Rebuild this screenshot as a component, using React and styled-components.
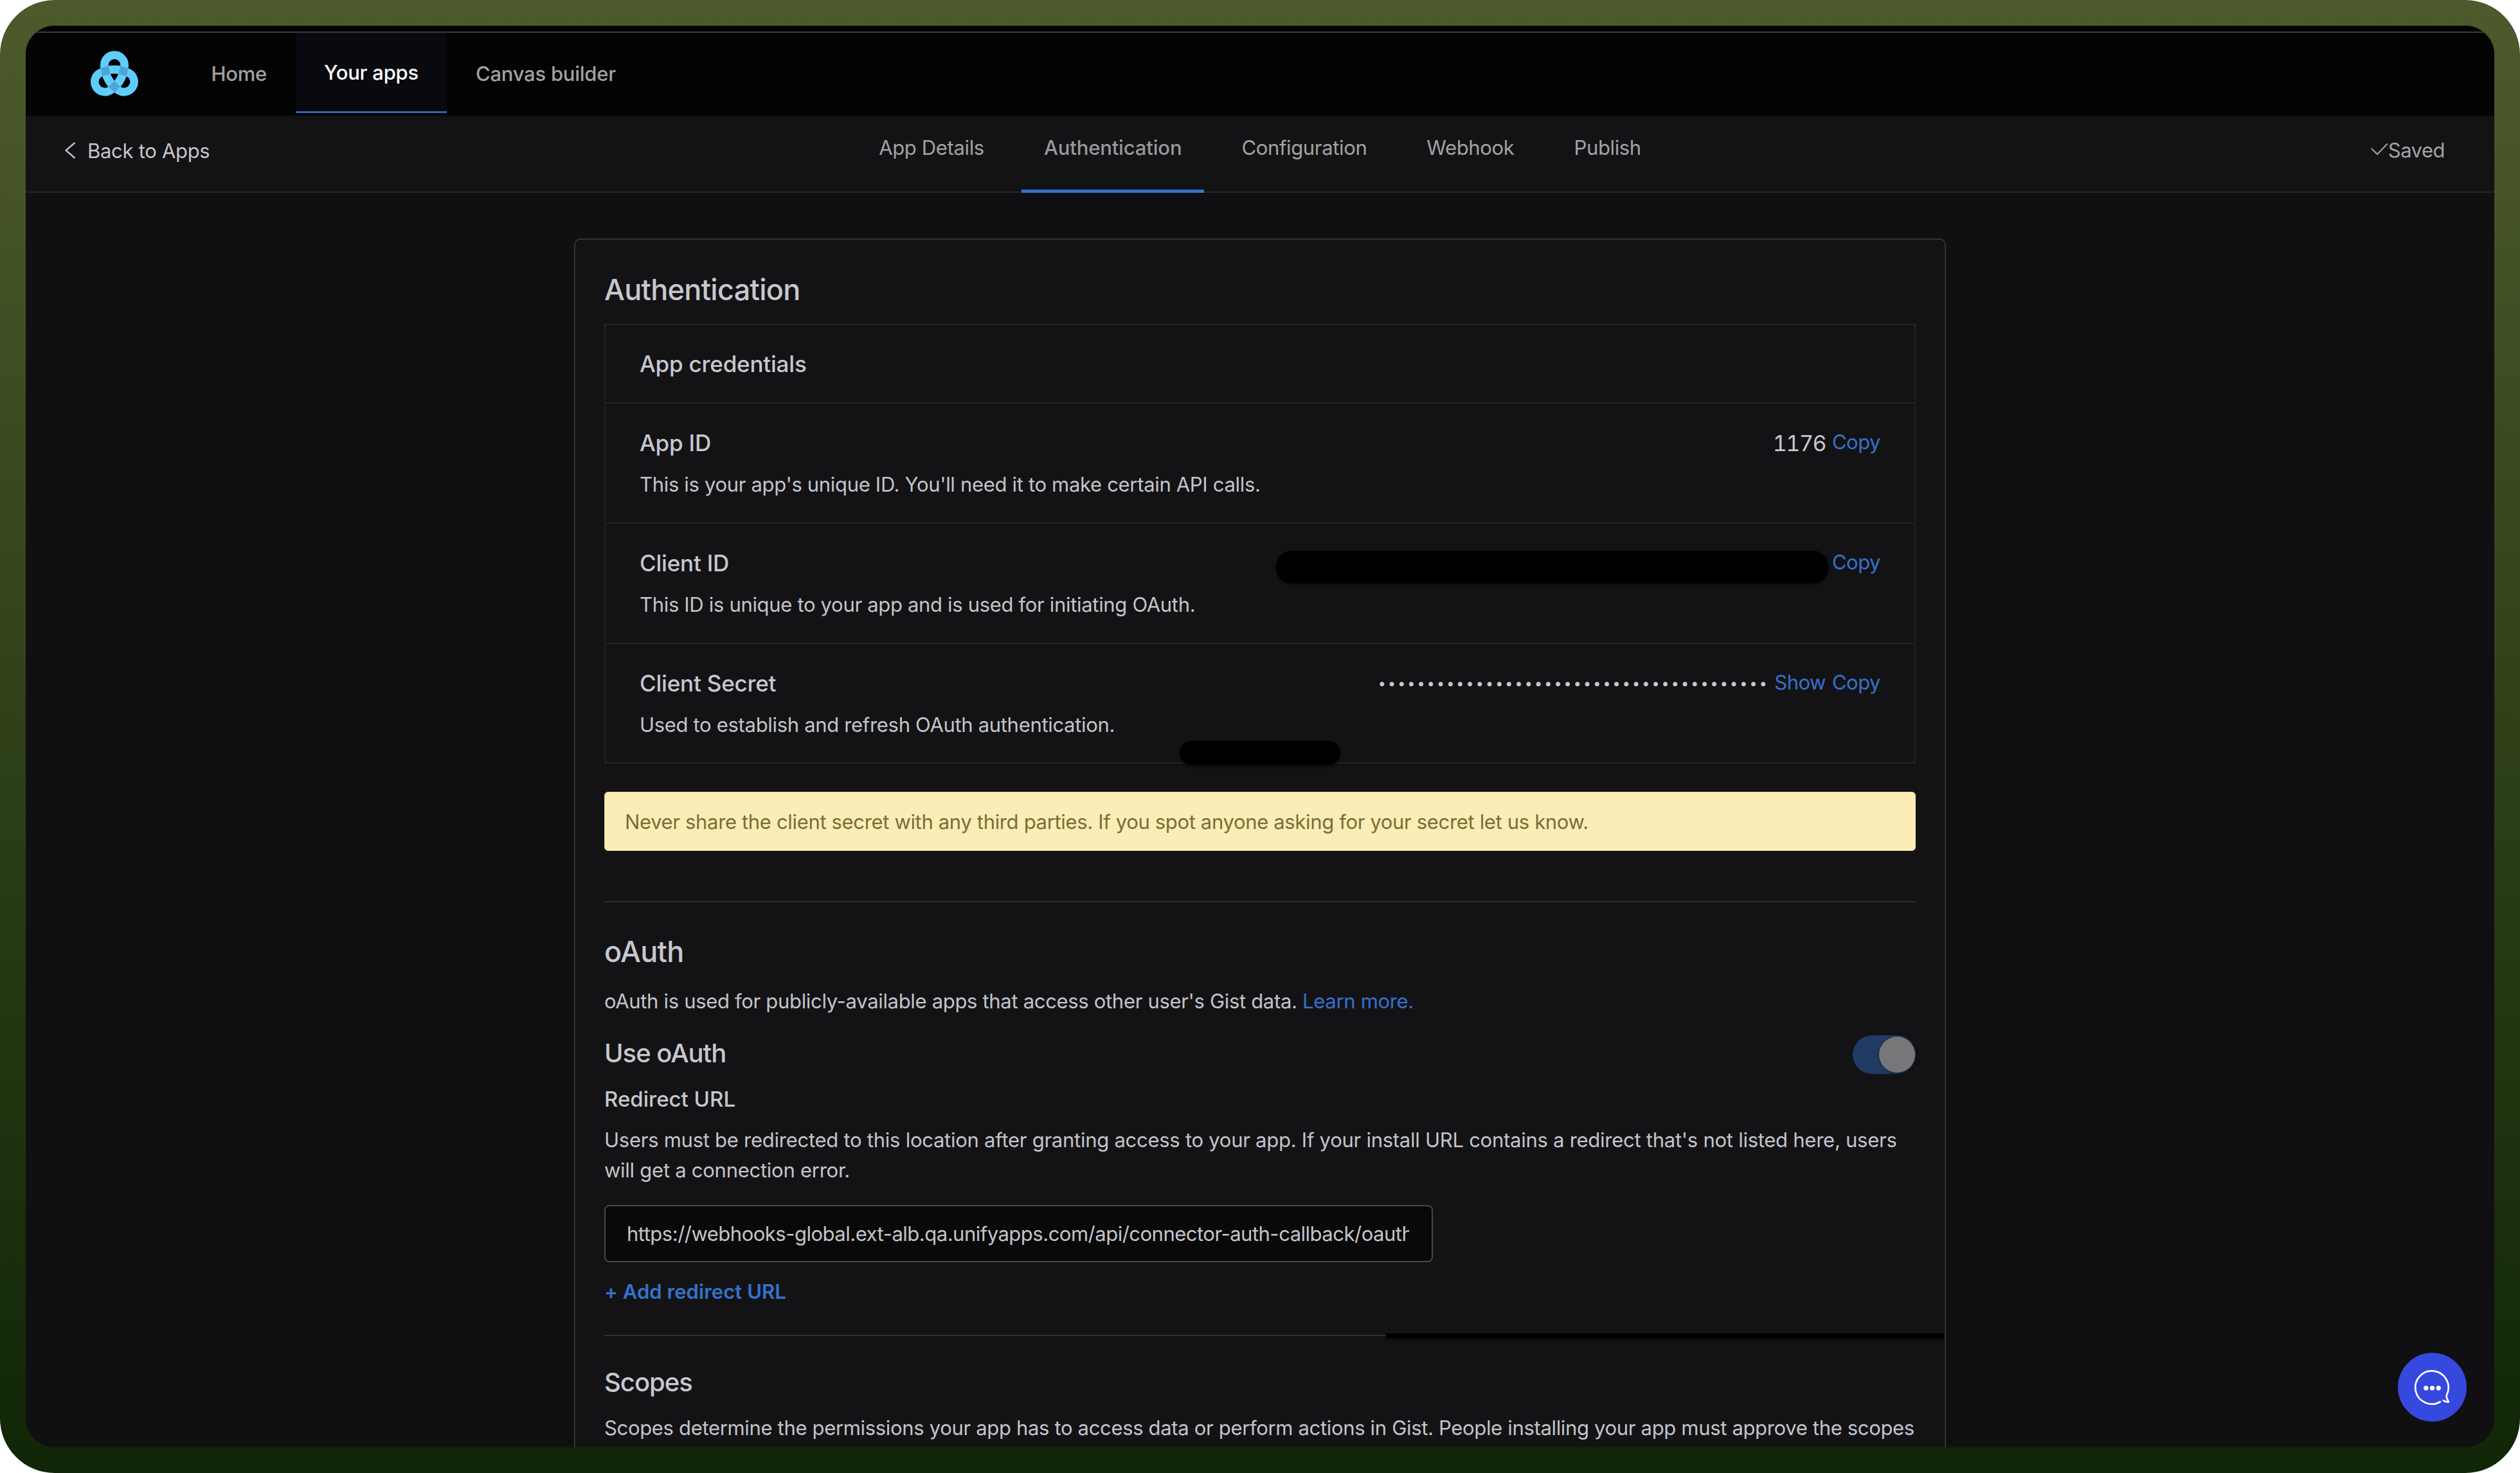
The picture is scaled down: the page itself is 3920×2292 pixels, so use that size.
import React from "react";
import styled, { createGlobalStyle } from "styled-components";

const navItems = [
  { label: "Home" },
  { label: "Your apps", active: true },
  { label: "Canvas builder" },
];

const tabs = [
  { label: "App Details" },
  { label: "Authentication", active: true },
  { label: "Configuration" },
  { label: "Webhook" },
  { label: "Publish" },
];

const LOBE =
  "M264 224 C238 200 217 165 217 123 A47 47 0 0 1 311 123 C311 165 290 200 264 224 Z";

function Logo() {
  return (
    <LogoSvg viewBox="150 50 228 222">
      {[0, 120, 240].map((angle) => (
        <path
          key={angle}
          d={LOBE}
          transform={`rotate(${angle} 264 175)`}
          fill="none"
          stroke="#5fcdfa"
          strokeWidth="38"
        />
      ))}
      {[0, 120, 240].map((angle) => (
        <path
          key={angle}
          d="M264 197 L291 224 L264 250 L237 224 Z"
          transform={`rotate(${angle} 264 175)`}
          fill="#4fa3d6"
        />
      ))}
    </LogoSvg>
  );
}

export default function App() {
  return (
    <>
      <GlobalStyle />
      <Backdrop>
        <Screen>
          <TopStrip />
          <Navbar>
            <Logo />
            {navItems.map((item) => (
              <NavItem key={item.label} $active={item.active}>
                {item.label}
              </NavItem>
            ))}
          </Navbar>

          <SubHeader>
            <BackLink>
              <BackIcon viewBox="0 0 17 26">
                <path d="M15.5 1 L1.5 13 L15.5 25" fill="none" stroke="currentColor" strokeWidth="2.4" />
              </BackIcon>
              Back to Apps
            </BackLink>
            <Tabs>
              {tabs.map((tab) => (
                <Tab key={tab.label} $active={tab.active}>
                  {tab.label}
                </Tab>
              ))}
            </Tabs>
            <Saved>
              <CheckIcon viewBox="0 0 27 20">
                <path d="M0.8 9 L10 18 L26 1.5" fill="none" stroke="currentColor" strokeWidth="2" />
              </CheckIcon>
              Saved
            </Saved>
          </SubHeader>

          <Body>
            <Card>
              <SectionTitle $top={46}>Authentication</SectionTitle>
              <Credentials>
                <CredentialsHeader>
                  <Label>App credentials</Label>
                </CredentialsHeader>
                <CredentialRow>
                  <div>
                    <Label>App ID</Label>
                    <Hint>This is your app's unique ID. You'll need it to make certain API calls.</Hint>
                  </div>
                  <Value>
                    <AppId>1176</AppId>
                    <Action>Copy</Action>
                  </Value>
                </CredentialRow>
                <CredentialRow>
                  <div>
                    <Label>Client ID</Label>
                    <Hint>This ID is unique to your app and is used for initiating OAuth.</Hint>
                  </div>
                  <Value>
                    <HiddenId />
                    <Action>Copy</Action>
                  </Value>
                </CredentialRow>
                <CredentialRow $last>
                  <div>
                    <Label>Client Secret</Label>
                    <Hint>Used to establish and refresh OAuth authentication.</Hint>
                  </div>
                  <Value>
                    <Dots>{"•".repeat(40)}</Dots>
                    <Action>Show</Action>
                    <Action>Copy</Action>
                  </Value>
                </CredentialRow>
                <HiddenPatch />
              </Credentials>

              <Alert>
                Never share the client secret with any third parties. If you spot anyone asking for your secret let us
                know.
              </Alert>

              <Divider $top={78} />

              <SectionTitle $top={45}>oAuth</SectionTitle>
              <Text $top={21}>
                oAuth is used for publicly-available apps that access other user's Gist data.{" "}
                <TextLink>Learn more.</TextLink>
              </Text>

              <ToggleRow>
                <SubTitle>Use oAuth</SubTitle>
                <Toggle>
                  <Knob />
                </Toggle>
              </ToggleRow>

              <FieldTitle>Redirect URL</FieldTitle>
              <Text $top={15} $spacing={-0.26}>
                Users must be redirected to this location after granting access to your app. If your install URL
                contains a redirect that's not listed here, users
                <br />
                will get a connection error.
              </Text>
              <UrlInput
                readOnly
                value="https://webhooks-global.ext-alb.qa.unifyapps.com/api/connector-auth-callback/oauth"
              />
              <AddButton>+ Add redirect URL</AddButton>

              <Divider $top={44}>
                <DividerCover />
              </Divider>

              <ScopesTitle>Scopes</ScopesTitle>
              <Text $top={17} $spacing={-0.33}>
                Scopes determine the permissions your app has to access data or perform actions in Gist. People
                installing your app must approve the scopes
              </Text>
            </Card>
          </Body>

          <ChatButton>
            <ChatIcon viewBox="0 0 320 320">
              <path
                d="M197 228 A77 77 0 1 1 229 192 Q224 200 228 211 L236 229 Q225 229 212 222"
                fill="none"
                stroke="#fff"
                strokeWidth="8"
                strokeLinecap="round"
                strokeLinejoin="round"
              />
              <circle cx="131" cy="164" r="11" fill="#fff" />
              <circle cx="160" cy="164" r="11" fill="#fff" />
              <circle cx="189" cy="164" r="11" fill="#fff" />
            </ChatIcon>
          </ChatButton>
        </Screen>
      </Backdrop>
    </>
  );
}

const GlobalStyle = createGlobalStyle`
  * {
    box-sizing: border-box;
  }

  body {
    margin: 0;
    background: #fff;
    font-family: Inter, "Liberation Sans", sans-serif;
  }
`;

const Backdrop = styled.div`
  height: 2292px;
  padding: 40px;
  border-radius: 85px;
  background: linear-gradient(180deg, #4d5a2b 0%, #102606 100%);
`;

const Screen = styled.div`
  position: relative;
  height: 2212px;
  overflow: hidden;
  border-radius: 45px;
  background: #101012;
  display: flex;
  flex-direction: column;
`;

const TopStrip = styled.div`
  flex: none;
  height: 11px;
  background: #000;
  border-bottom: 2px solid #3c3c3c;
`;

const Navbar = styled.nav`
  flex: none;
  display: flex;
  height: 129px;
  padding-left: 100px;
  background: #030303;
`;

const LogoSvg = styled.svg`
  width: 76px;
  height: 74px;
  margin: 26px 68px 0 0;
`;

const NavItem = styled.a`
  display: flex;
  align-items: center;
  height: ${(p) => (p.$active ? "125px" : "127px")};
  padding: 0 44.5px;
  border-bottom: ${(p) => (p.$active ? "3px solid #2f66b8" : "none")};
  background: ${(p) => (p.$active ? "#090a10" : "transparent")};
  color: ${(p) => (p.$active ? "#fff" : "#a2a2a2")};
  font-size: 31px;
  font-weight: 500;
  letter-spacing: -0.25px;
`;

const SubHeader = styled.div`
  flex: none;
  display: grid;
  grid-template-columns: 1fr auto 1fr;
  height: 120px;
  border-bottom: 2px solid #262628;
  background: #131315;
`;

const BackLink = styled.a`
  display: flex;
  align-items: center;
  height: 108px;
  padding-left: 61px;
  color: #c3c5cb;
  font-size: 31px;
  letter-spacing: -0.3px;
`;

const BackIcon = styled.svg`
  width: 17px;
  height: 26px;
  margin: -1px 18px 0 0;
`;

const Tabs = styled.div`
  display: flex;
  gap: 23px;
  height: 120px;
`;

const Tab = styled.a`
  display: flex;
  align-items: center;
  height: 120px;
  padding: 0 35px 16px;
  border-bottom: 5px solid ${(p) => (p.$active ? "#3873cf" : "transparent")};
  color: ${(p) => (p.$active ? "#98989a" : "#a3a3a3")};
  font-size: 31px;
  font-weight: ${(p) => (p.$active ? 500 : 400)};
  letter-spacing: ${(p) => (p.$active ? "-0.15px" : "-0.35px")};
`;

const Saved = styled.div`
  display: flex;
  align-items: center;
  justify-content: flex-end;
  height: 106px;
  padding-right: 77px;
  color: #a3a3a4;
  font-size: 31px;
  letter-spacing: -0.5px;
`;

const CheckIcon = styled.svg`
  width: 27px;
  height: 20px;
  margin-top: -3px;
`;

const Body = styled.main`
  display: flex;
  justify-content: center;
  padding-top: 71px;
`;

const Card = styled.section`
  flex: none;
  width: 2134px;
  height: 2000px;
  padding: 0 45px;
  border: 2px solid #343436;
  border-radius: 10px;
  background: #131315;
`;

const SectionTitle = styled.h2`
  margin: ${(p) => p.$top}px 0 0;
  color: #c6c8ce;
  font-size: 45px;
  font-weight: 500;
  line-height: 64px;
  letter-spacing: -0.7px;
`;

const Credentials = styled.div`
  position: relative;
  margin-top: 21px;
  border: 2px solid #232325;
  border-bottom: none;
`;

const CredentialsHeader = styled.div`
  height: 122px;
  padding: 33px 53px 0;
  border-bottom: 2px solid #232325;
`;

const CredentialRow = styled.div`
  display: flex;
  justify-content: space-between;
  height: ${(p) => (p.$last ? "186px" : "187px")};
  padding: 34px 53px 0;
  border-bottom: 2px solid #232325;
`;

const Label = styled.div`
  color: #c6c8ce;
  font-size: 35px;
  font-weight: 500;
  line-height: 54px;
  letter-spacing: -0.2px;
`;

const Text = styled.p`
  margin: ${(p) => p.$top}px 0 0;
  color: #c3c5cb;
  font-size: 31px;
  line-height: 47px;
  letter-spacing: ${(p) => p.$spacing || -0.32}px;
  white-space: nowrap;
`;

const Hint = styled(Text)`
  margin-top: 14px;
`;

const Value = styled.div`
  display: flex;
  gap: 10px;
  height: 54px;
`;

const AppId = styled.span`
  color: #c6c8ce;
  font-size: 34px;
  line-height: 55px;
  font-variant-numeric: tabular-nums;
  letter-spacing: -1.5px;
`;

const Action = styled.a`
  color: #3472cc;
  font-size: 31px;
  line-height: 51px;
  letter-spacing: -0.5px;
`;

const HiddenId = styled.div`
  width: 859px;
  height: 51px;
  margin: 8px -4px 0 0;
  border-radius: 24px;
  background: #000;
  box-shadow: 0 2px 4px rgba(0, 0, 0, 0.4);
`;

const Dots = styled.span`
  color: #c6c8ce;
  font-family: "Liberation Mono", monospace;
  font-size: 25px;
  line-height: 61px;
  letter-spacing: 0.2px;
`;

/* sits across the lower border of the credentials box */
const HiddenPatch = styled.div`
  position: absolute;
  left: 893px;
  top: 647px;
  width: 250px;
  height: 37px;
  border-radius: 18px;
  background: #000;
  box-shadow: 0 3px 5px rgba(0, 0, 0, 0.4);
`;

const Alert = styled.div`
  display: flex;
  align-items: center;
  height: 92px;
  margin-top: 44px;
  padding-left: 31px;
  border: 1px solid #e3d596;
  border-radius: 6px;
  background: #fbedb6;
  color: #7a6d33;
  font-size: 31px;
  letter-spacing: -0.34px;
  white-space: nowrap;
`;

const Divider = styled.div`
  position: relative;
  height: 2px;
  margin-top: ${(p) => p.$top}px;
  background: #313133;
`;

const DividerCover = styled.div`
  position: absolute;
  left: 1216px;
  top: -2px;
  width: 868px;
  height: 7px;
  background: #000;
  box-shadow: 0 2px 4px rgba(0, 0, 0, 0.5);
`;

const TextLink = styled.a`
  color: #3472cc;
`;

const ToggleRow = styled.div`
  display: flex;
  justify-content: space-between;
  height: 64px;
  margin-top: 27px;
`;

const SubTitle = styled.h3`
  margin: 0;
  color: #c6c8ce;
  font-size: 40px;
  font-weight: 500;
  line-height: 61px;
  letter-spacing: -1px;
`;

const Toggle = styled.div`
  display: flex;
  align-items: center;
  justify-content: flex-end;
  width: 98px;
  height: 60px;
  margin-top: 3px;
  padding-right: 1px;
  border-radius: 30px;
  background: #213a63;
`;

const Knob = styled.div`
  width: 56px;
  height: 56px;
  border-radius: 50%;
  background: #777779;
  box-shadow: 0 2px 4px rgba(0, 0, 0, 0.3);
`;

const FieldTitle = styled.h4`
  margin: 13px 0 0;
  color: #c6c8ce;
  font-size: 33px;
  font-weight: 500;
  line-height: 50px;
`;

const UrlInput = styled.input`
  display: block;
  width: 1289px;
  height: 89px;
  margin-top: 31px;
  padding: 0 35px 0 33px;
  border: 2px solid #474747;
  border-radius: 8px;
  outline: none;
  background: #090909;
  color: #c3c5cb;
  font-family: inherit;
  font-size: 31px;
  letter-spacing: -0.5px;
`;

const AddButton = styled.button`
  display: block;
  margin-top: 22px;
  padding: 0;
  border: none;
  background: none;
  color: #3472cc;
  font-family: inherit;
  font-size: 31px;
  font-weight: 600;
  line-height: 47px;
  letter-spacing: 0.05px;
`;

const ScopesTitle = styled(SubTitle)`
  margin-top: 41px;
`;

const ChatButton = styled.button`
  position: absolute;
  right: 43px;
  bottom: 40px;
  width: 107px;
  height: 107px;
  padding: 0;
  border: none;
  border-radius: 50%;
  background: #3549df;
`;

const ChatIcon = styled.svg`
  display: block;
  width: 107px;
  height: 107px;
`;
